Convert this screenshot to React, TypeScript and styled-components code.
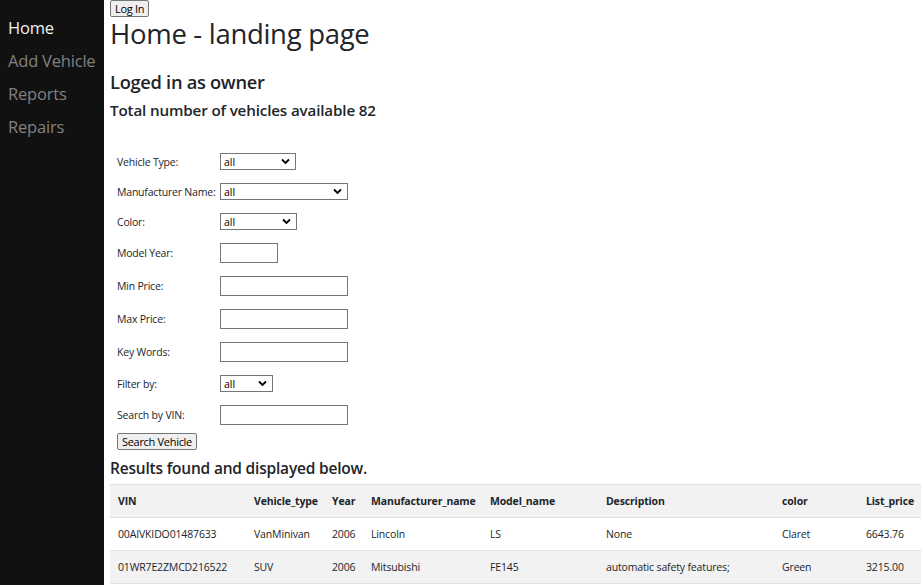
import React from "react";
import styled, { createGlobalStyle } from "styled-components";

const Global = createGlobalStyle`
  html, body { margin: 0; padding: 0; background: #fff; }
  body { font-family: "Open Sans", "Noto Sans", sans-serif; color: #212529; }
  * { box-sizing: border-box; }
`;

const Page = styled.div`
  display: flex;
  min-height: 585px;
`;

const Sidebar = styled.nav`
  width: 104px;
  flex: none;
  background: #111;
  padding-top: 17px;
  display: flex;
  flex-direction: column;
  min-height: 585px;
`;

const NavLink = styled.a<{ $active?: boolean }>`
  display: block;
  padding: 0 0 0 8px;
  height: 33px;
  line-height: 22px;
  font-size: 16.5px;
  color: ${(p) => (p.$active ? "#f1f1f1" : "#818181")};
  text-decoration: none;
  letter-spacing: -0.2px;
`;

const Main = styled.main`
  flex: 1;
  padding-left: 6px;
  min-width: 0;
  display: flex;
  flex-direction: column;
  align-items: flex-start;
`;

const Button = styled.button`
  display: block;
  font-family: "Open Sans", sans-serif;
  font-size: 11px;
  line-height: 13px;
  padding: 1px 4px;
  background: #efefef;
  border: 1px solid #767676;
  border-radius: 2px;
  color: #000;
  letter-spacing: -0.3px;
`;

const Title = styled.h1`
  margin: -1px 0 0;
  font-size: 27.5px;
  font-weight: 400;
  line-height: 36px;
  letter-spacing: -0.3px;
`;

const Sub = styled.h3`
  margin: 18px 0 0;
  font-size: 18.3px;
  font-weight: 600;
  line-height: 24px;
  letter-spacing: -0.3px;
`;

const Count = styled.h4`
  margin: 6px 0 0;
  font-size: 15.2px;
  font-weight: 600;
  line-height: 20px;
  letter-spacing: -0.15px;
`;

const Form = styled.form`
  display: grid;
  grid-template-columns: 103px auto;
  justify-content: start;
  align-items: center;
  row-gap: 13px;
  padding: 33px 0 0 7px;
`;

const Label = styled.label`
  font-size: 10.5px;
  color: #212529;
  letter-spacing: -0.2px;
`;

const SelectWrap = styled.div<{ $w: number }>`
  position: relative;
  width: ${(p) => p.$w}px;
  height: 17px;
`;

const Select = styled.select`
  display: block;
  appearance: none;
  width: 100%;
  height: 17px;
  border: 1px solid #767676;
  border-radius: 0;
  background: #fff;
  font-family: "Open Sans", sans-serif;
  font-size: 10.5px;
  line-height: 15px;
  padding: 1px 0 0 3px;
  color: #000;
  outline: none;
`;

const Chevron = styled.svg`
  position: absolute;
  right: 6px;
  top: 5px;
  width: 9px;
  height: 7px;
  pointer-events: none;
`;

const Input = styled.input<{ $w: number }>`
  display: block;
  width: ${(p) => p.$w}px;
  height: 20px;
  border: 1px solid #767676;
  border-radius: 0;
  padding: 0 3px;
  outline: none;
`;

const SubmitRow = styled.div`
  grid-column: 1 / span 2;
  margin-top: -5px;
`;

const ResultsTitle = styled.h5`
  margin: 8px 0 0;
  font-size: 15.5px;
  font-weight: 600;
  line-height: 20px;
  letter-spacing: -0.2px;
`;

const Table = styled.table`
  margin-top: 6px;
  width: 811px;
  border-collapse: collapse;
  table-layout: fixed;
  font-size: 10.5px;
  letter-spacing: -0.15px;
`;

const Th = styled.th`
  text-align: left;
  font-weight: 700;
  height: 33px;
  padding: 0 8px;
  background: #f2f2f2;
  border-top: 1px solid #dee2e6;
  border-bottom: 1px solid #dee2e6;
  white-space: nowrap;
`;

const Tr = styled.tr`
  &:nth-child(even) { background: #f2f2f2; }
`;

const Td = styled.td`
  height: 33px;
  padding: 0 8px;
  border-bottom: 1px solid #dee2e6;
  white-space: nowrap;
  color: #212529;
`;

const Caret = () => (
  <Chevron viewBox="0 0 9 7">
    <path d="M1 1.5 L4.5 5 L8 1.5" fill="none" stroke="#000" strokeWidth="1.8" />
  </Chevron>
);

const Dropdown = ({ w }: { w: number }) => (
  <SelectWrap $w={w}>
    <Select defaultValue="all">
      <option value="all">all</option>
    </Select>
    <Caret />
  </SelectWrap>
);

const cols = [
  { name: "VIN", w: 136 },
  { name: "Vehicle_type", w: 78 },
  { name: "Year", w: 39 },
  { name: "Manufacturer_name", w: 119 },
  { name: "Model_name", w: 116 },
  { name: "Description", w: 176 },
  { name: "color", w: 84 },
  { name: "List_price", w: 63 },
];

const rows = [
  ["00AIVKIDO01487633", "VanMinivan", "2006", "Lincoln", "LS", "None", "Claret", "6643.76"],
  ["01WR7E2ZMCD216522", "SUV", "2006", "Mitsubishi", "FE145", "automatic safety features;", "Green", "3215.00"],
];

export default function App() {
  return (
    <>
      <Global />
      <Page>
        <Sidebar>
          <NavLink href="#" $active>Home</NavLink>
          <NavLink href="#">Add Vehicle</NavLink>
          <NavLink href="#">Reports</NavLink>
          <NavLink href="#">Repairs</NavLink>
        </Sidebar>
        <Main>
          <Button type="button">Log In</Button>
          <Title>Home - landing page</Title>
          <Sub>Loged in as owner</Sub>
          <Count>Total number of vehicles available 82</Count>
          <Form onSubmit={(e) => e.preventDefault()}>
            <Label>Vehicle Type:</Label>
            <Dropdown w={76} />
            <Label>Manufacturer Name:</Label>
            <Dropdown w={128} />
            <Label>Color:</Label>
            <Dropdown w={77} />
            <Label>Model Year:</Label>
            <Input $w={58} />
            <Label>Min Price:</Label>
            <Input $w={128} />
            <Label>Max Price:</Label>
            <Input $w={128} />
            <Label>Key Words:</Label>
            <Input $w={128} />
            <Label>Filter by:</Label>
            <Dropdown w={53} />
            <Label>Search by VIN:</Label>
            <Input $w={128} />
            <SubmitRow>
              <Button type="submit">Search Vehicle</Button>
            </SubmitRow>
          </Form>
          <ResultsTitle>Results found and displayed below.</ResultsTitle>
          <Table>
            <colgroup>
              {cols.map((c) => (
                <col key={c.name} style={{ width: c.w }} />
              ))}
            </colgroup>
            <thead>
              <tr>
                {cols.map((c) => (
                  <Th key={c.name}>{c.name}</Th>
                ))}
              </tr>
            </thead>
            <tbody>
              {rows.map((r) => (
                <Tr key={r[0]}>
                  {r.map((v, i) => (
                    <Td key={i}>{v}</Td>
                  ))}
                </Tr>
              ))}
              <Tr>
                {cols.map((c) => (
                  <Td key={c.name}>&nbsp;</Td>
                ))}
              </Tr>
            </tbody>
          </Table>
        </Main>
      </Page>
    </>
  );
}
